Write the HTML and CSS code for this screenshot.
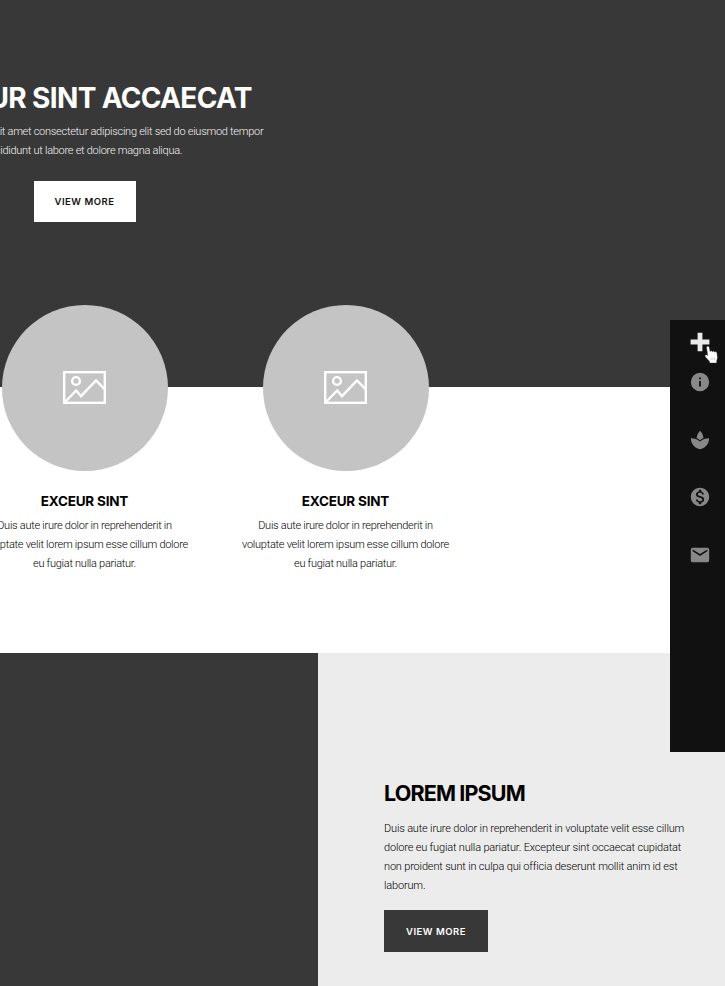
FILE: index.html
```
<!DOCTYPE html>
<html lang="en">
<head>
<meta charset="utf-8">
<title>Landing page</title>
<link rel="stylesheet" href="styles.css">
</head>
<body>
<svg class="defs" width="0" height="0">
  <symbol id="picture" viewBox="0 0 43 33">
    <g fill="none" stroke="#fff" stroke-width="2.4">
      <rect x="1.2" y="1.2" width="40.6" height="30.6"/>
      <circle cx="13" cy="10" r="3.9"/>
      <path d="M2 31 13.2 19.5 18 25.2 33 9.5 41.5 18.2"/>
    </g>
  </symbol>
</svg>
<main class="page">
  <section class="hero">
    <div class="hero-content">
      <h1>EXCEUR SINT ACCAECAT</h1>
      <p class="hero-copy">Lorem ipsum dolor sit amet consectetur adipiscing elit sed do eiusmod tempor<br>incididunt ut labore et dolore magna aliqua.</p>
      <a class="button light">VIEW MORE</a>
    </div>
  </section>
  <section class="features">
    <article class="feature">
      <div class="circle"><svg width="43" height="33"><use href="#picture"/></svg></div>
      <h3>EXCEUR SINT</h3>
      <p>Duis aute irure dolor in reprehenderit in<br>voluptate velit lorem ipsum esse cillum dolore<br>eu fugiat nulla pariatur.</p>
    </article>
    <article class="feature">
      <div class="circle"><svg width="43" height="33"><use href="#picture"/></svg></div>
      <h3>EXCEUR SINT</h3>
      <p>Duis aute irure dolor in reprehenderit in<br>voluptate velit lorem ipsum esse cillum dolore<br>eu fugiat nulla pariatur.</p>
    </article>
  </section>
  <section class="split">
    <div class="split-media"></div>
    <div class="split-content">
      <h2>LOREM IPSUM</h2>
      <p>Duis aute irure dolor in reprehenderit in voluptate velit esse cillum<br>dolore eu fugiat nulla pariatur. Excepteur sint occaecat cupidatat<br>non proident sunt in culpa qui officia deserunt mollit anim id est<br>laborum.</p>
      <a class="button dark">VIEW MORE</a>
    </div>
  </section>
</main>
<nav class="toolbar">
  <svg class="plus" width="20" height="20" viewBox="0 0 20 20"><path fill="#e9e9e9" d="M7.6 .7h4.8v6.900h7v4.800h-7V19.300H7.600v-6.900H.6V7.600h7z"/></svg>
  <svg class="tool" viewBox="0 0 24 24"><path d="M12 2a10 10 0 1 0 0 20 10 10 0 0 0 0-20zm1 15h-2v-6h2zm0-8h-2V7h2z"/></svg>
  <svg class="tool" viewBox="0 0 24 24"><path d="M15.800 9.800c-.3-2.900-1.600-5.800-3.740-7.800a12.500 12.500 0 0 0-3.860 7.800c1.400.7 2.700 1.500 3.800 2.500 1.100-1 2.400-1.800 3.800-2.500zM12 13.600C9.500 11.300 6.180 10 2 10c0 5.32 3.36 9.82 8.03 11.49.63.23 1.29.4 1.97.51.68-.12 1.33-.29 1.97-.51C18.64 19.82 22 15.32 22 10c-4.18 0-7.500 1.300-10 3.600z"/></svg>
  <svg class="tool" viewBox="0 0 24 24"><path d="M12 2C6.48 2 2 6.48 2 12s4.480 10 10 10 10-4.480 10-10S17.520 2 12 2zm1.410 16.090V20h-2.670v-1.930c-1.710-.36-3.160-1.460-3.270-3.400h1.960c.1 1.050.82 1.870 2.650 1.870 1.960 0 2.400-.98 2.400-1.590 0-.83-.44-1.610-2.670-2.140-2.480-.6-4.180-1.620-4.180-3.670 0-1.720 1.390-2.840 3.110-3.210V4h2.670v1.950c1.860.45 2.790 1.860 2.850 3.390H14.300c-.05-1.110-.64-1.870-2.220-1.870-1.500 0-2.400.68-2.400 1.640 0 .84.65 1.390 2.670 1.910s4.180 1.390 4.180 3.910c-.01 1.830-1.380 2.830-3.120 3.160z"/></svg>
  <svg class="tool" viewBox="0 0 24 24"><path d="M20 4H4a2 2 0 0 0-2 2v12c0 1.100.9 2 2 2h16a2 2 0 0 0 2-2V6a2 2 0 0 0-2-2zm0 4-8 5-8-5V6l8 5 8-5z"/></svg>
  <svg class="cursor" width="15" height="20" viewBox="0 0 16 20"><path fill="#fff" stroke="#333" stroke-width=".4" d="M2.700 2c0-1.800 2.700-1.800 3 0L6.500 6.400c.3-1.300 2.200-1 2.500.1.500-1 2.200-.7 2.500.5.700-.9 2.200-.4 2.300.8l.5 4.700c.2 1.700-.8 2.800-.8 4.200v1.800H6v-1.700L1.500 12c-1.200-1.800.6-3.200 2.100-1.800l.4.300z"/><path fill="none" stroke="#aaa" stroke-width=".5" d="M7.600 12.500v3M9.500 12.500v3M11.300 12.500v3"/></svg>
</nav>
</body>
</html>
```
FILE: styles.css
```
* { box-sizing: border-box; }
body { margin: 0; font-family: Roboto, "Liberation Sans", sans-serif; overflow: hidden; }
.defs { position: absolute; }
.page { width: 725px; height: 986px; overflow: hidden; background: #fff; }
h1, h2, h3, .button { font-family: Inter, "Liberation Sans", sans-serif; }
h1, h2, h3, p { margin: 0; white-space: nowrap; }
p { font-size: 11px; font-weight: 300; line-height: 19px; color: #000; letter-spacing: -.27px; }

.hero { height: 387px; background: #383838; padding-top: 78px; }
.hero-content {
  width: 400px;
  margin-left: -115.5px;
  display: flex;
  flex-direction: column;
  align-items: center;
  text-align: center;
}
h1 { font-size: 28px; line-height: 40px; font-weight: 700; color: #fff; letter-spacing: -.65px; }
.hero-copy { margin-top: 4px; color: #f4f4f4; }
.button {
  display: flex;
  align-items: center;
  justify-content: center;
  font-size: 9.5px;
  font-weight: 600;
  letter-spacing: .5px;
}
.light { width: 102px; height: 41px; margin-top: 21px; padding-bottom: 1px; background: #fff; color: #111; }
.dark { width: 104px; height: 42px; margin-top: 15px; background: #383838; color: #fff; }

.features { display: flex; height: 266px; margin-left: -46px; }
.feature {
  flex: 0 0 261px;
  display: flex;
  flex-direction: column;
  align-items: center;
  text-align: center;
  margin-top: -82.5px;
}
.circle {
  width: 166px;
  height: 166px;
  flex: none;
  border-radius: 50%;
  background: #c4c4c4;
  display: flex;
  align-items: center;
  justify-content: center;
}
h3 { margin-top: 20.5px; font-size: 13.5px; line-height: 20px; font-weight: 700; color: #000; letter-spacing: -.2px; }
.feature p { margin-top: 5px; }

.split { display: grid; grid-template-columns: 318px 1fr; height: 333px; }
.split-media { background: #383838; }
.split-content { background: #ececec; padding: 124px 0 0 66px; }
h2 { font-size: 21.5px; line-height: 32px; font-weight: 700; color: #000; letter-spacing: -.85px; }
.split-content p { margin-top: 10px; letter-spacing: -.17px; }

.toolbar {
  position: absolute;
  left: 670px;
  top: 320px;
  width: 55px;
  height: 432px;
  background: #111;
  display: flex;
  flex-direction: column;
  align-items: center;
  padding: 12px 0 0 5px;
}
.toolbar svg { flex: none; }
.tool { width: 22px; height: 22px; fill: #888; margin-bottom: 35.5px; }
.toolbar .plus { margin-bottom: 19px; }
.cursor { position: absolute; left: 34px; top: 25px; }
```
